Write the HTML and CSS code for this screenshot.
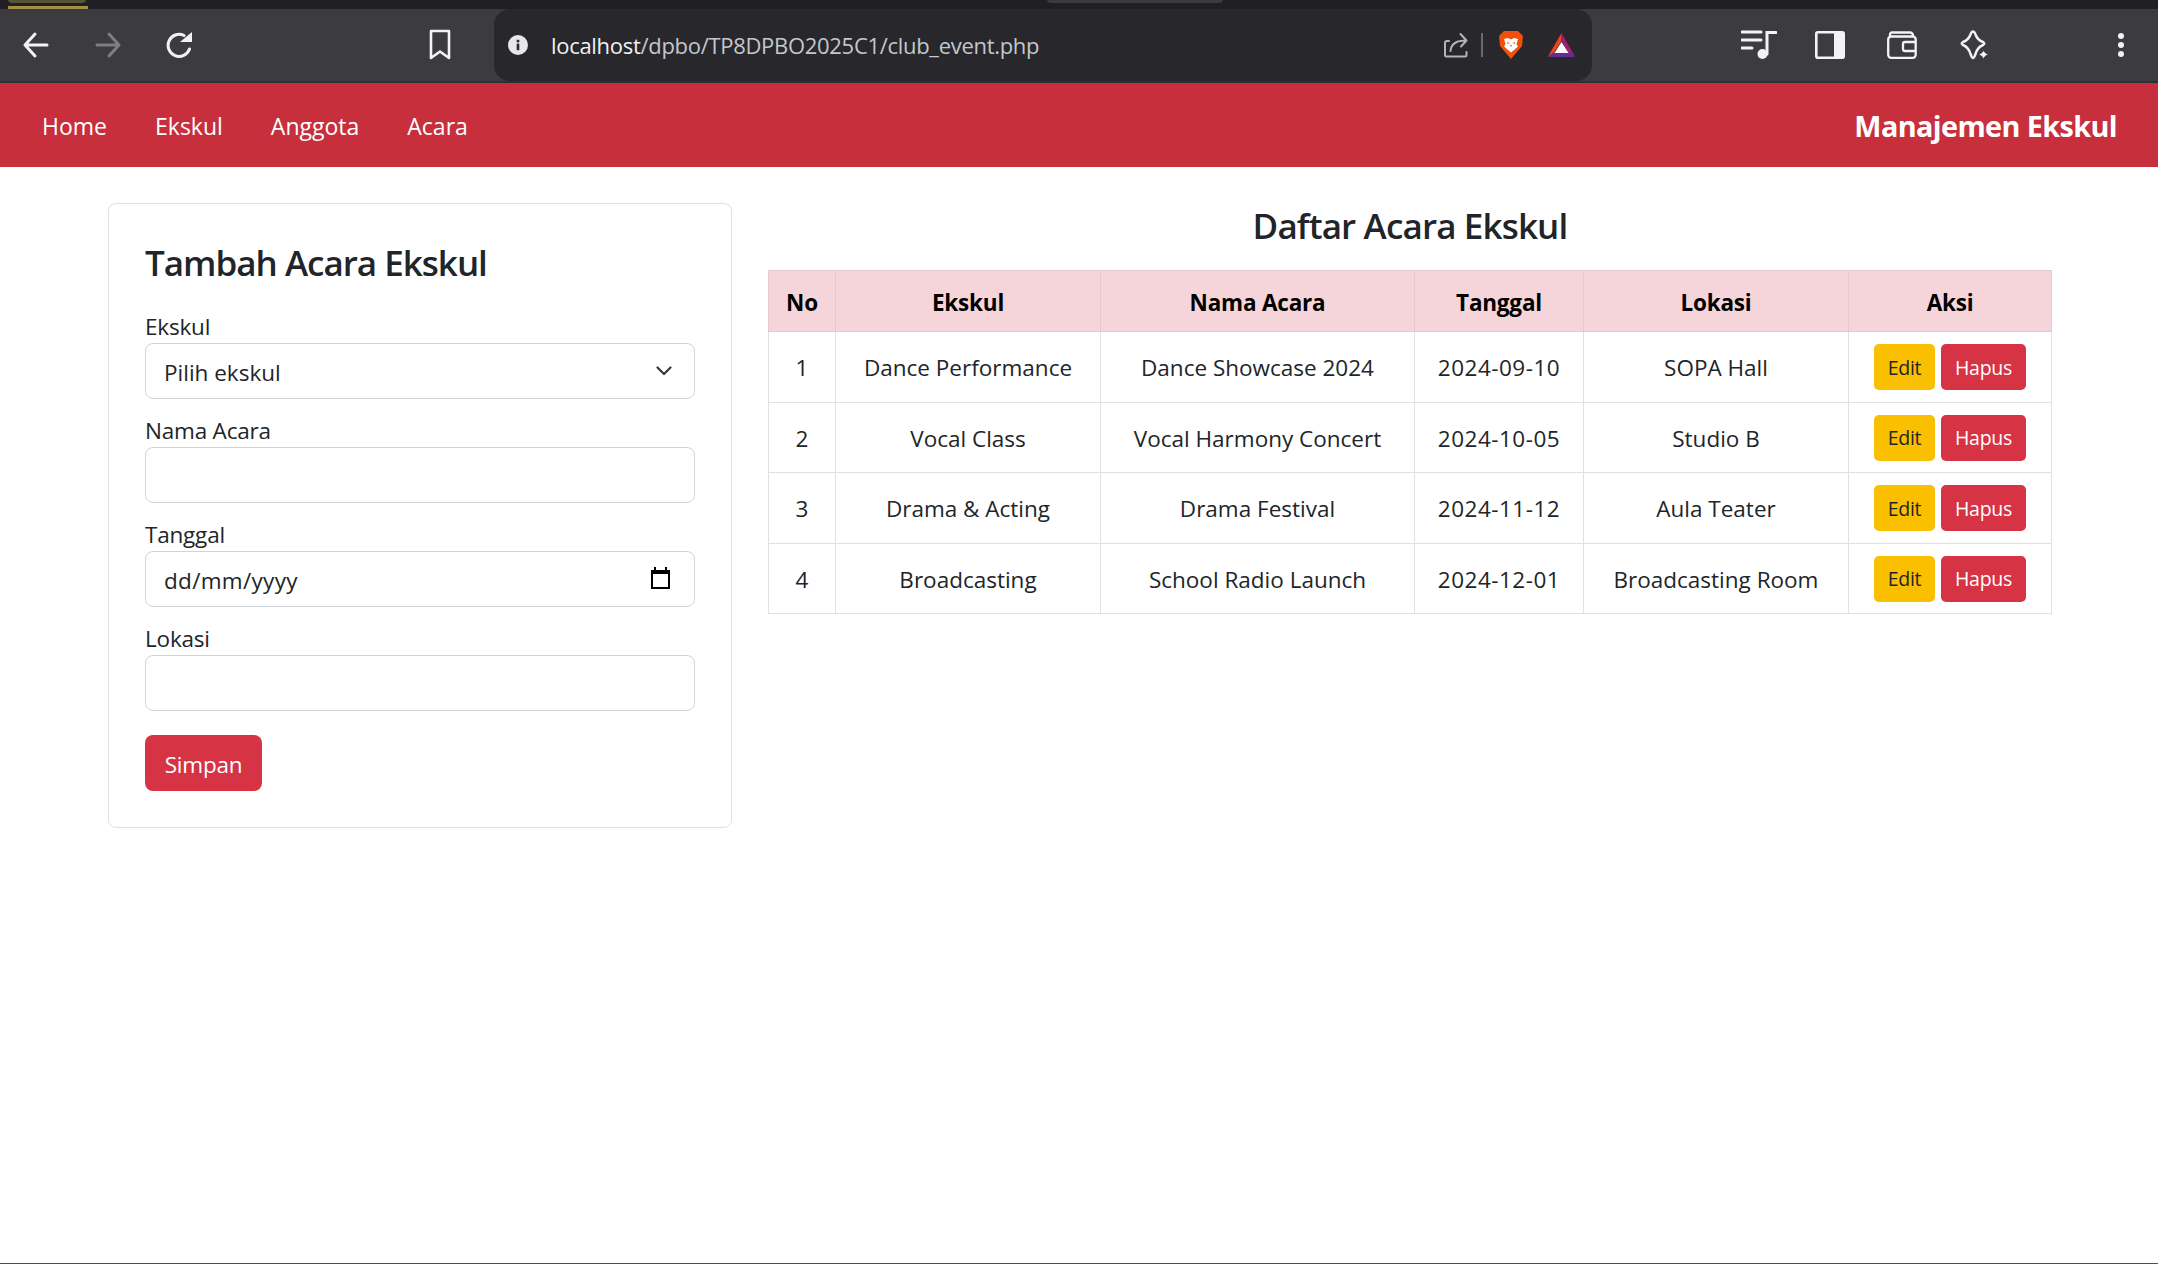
FILE: index.html
```html
<!DOCTYPE html>
<html lang="id">
<head>
<meta charset="utf-8">
<title>Manajemen Ekskul</title>
<link rel="stylesheet" href="styles.css">
</head>
<body>
<div class="strip"><span class="tab-thumb"></span><span class="tab-line"></span><span class="tab-center"></span></div>
<header class="toolbar">
  <div class="nav-icons">
    <svg class="ic" width="28" height="28" viewBox="0 0 28 28" fill="none" stroke="#f3f3f5" stroke-width="3" stroke-linecap="round" stroke-linejoin="round"><path d="M3 14H25M13 3L3 14L13 25"/></svg>
    <svg class="ic" width="28" height="28" viewBox="0 0 28 28" fill="none" stroke="#7e7e81" stroke-width="3" stroke-linecap="round" stroke-linejoin="round"><path d="M3 14H25M15 3L25 14L15 25"/></svg>
    <svg class="ic" width="28" height="28" viewBox="0 0 28 28" fill="none"><path d="M23.5 18A11 11 0 1 1 18 4.5" stroke="#f3f3f5" stroke-width="3" stroke-linecap="round"/><path d="M14 11H26V1Z" fill="#f3f3f5"/></svg>
  </div>
  <svg class="bookmark" width="26" height="32" viewBox="0 0 26 32" fill="none" stroke="#f3f3f5" stroke-width="2.6" stroke-linejoin="round"><path d="M4 2H22V29L13 22.5L4 29Z"/></svg>
  <div class="omnibox">
    <svg class="info" width="20" height="20" viewBox="0 0 20 20"><circle cx="10" cy="10" r="10" fill="#e8e8ea"/><rect x="8.7" y="8.6" width="2.6" height="6.6" fill="#28282d"/><rect x="8.7" y="4.8" width="2.6" height="2.5" fill="#28282d"/></svg>
    <span class="url"><span class="host">localhost</span>/dpbo/TP8DPBO2025C1/club_event.php</span>
    <svg class="share" width="24" height="26" viewBox="0 0 24 26" fill="none" stroke="#b4b4b7" stroke-width="2" stroke-linecap="round" stroke-linejoin="round"><path d="M5 9H3A2 2 0 0 0 1 11V23A1.5 1.5 0 0 0 2.5 24.500H21A1.500 1.500 0 0 0 22.500 23V20"/><path d="M6.500 19C7 12 12 8.500 22 8.500M16.500 2L22.500 8.500L17 14.500"/></svg>
    <span class="divider"></span>
    <svg class="brave" width="24" height="28" viewBox="0 0 24 28"><path d="M5 0H19L24 5L23 15L12 28L1 15L0 5Z" fill="#f1500c"/><path d="M5 8L9 7L12 8.500L15 7L19 8L17.500 13L19 15.500L15 19L12 21.500L9 19L5 15.500L6.500 13Z" fill="#fff"/><path d="M11 14H13L12 16Z" fill="#f1500c"/><path d="M8 11L10.500 12L8.500 13ZM16 11L13.500 12L15.500 13Z" fill="#f1500c"/></svg>
    <svg class="bat" width="27" height="24" viewBox="0 0 27 24"><path d="M13.500 0L0 23.500L6 19.500L13.500 8Z" fill="#f0441d"/><path d="M13.500 0L27 23.500L20 19.500L13.500 8Z" fill="#9c1f78"/><path d="M0 24H27L21 19H6Z" fill="#652d91"/><path d="M13.500 9L6.500 20H20.500Z" fill="#fff"/></svg>
  </div>
  <div class="ext-icons">
    <svg width="36" height="30" viewBox="0 0 36 30" fill="none" stroke="#f3f3f5" stroke-width="3" stroke-linecap="round"><path d="M1 2H20M1 10H20M1 18H11M26 24V2.500H35"/><circle cx="21.500" cy="24" r="5" fill="#f3f3f5" stroke="none"/></svg>
    <svg width="30" height="28" viewBox="0 0 30 28"><rect x="1.300" y="1.300" width="27.400" height="25.400" rx="1.500" fill="none" stroke="#f3f3f5" stroke-width="2.600"/><rect x="19" y="1" width="10" height="26" fill="#f3f3f5"/></svg>
    <svg class="ext-wide" width="30" height="28" viewBox="0 0 30 28" fill="none" stroke="#f3f3f5" stroke-width="2.300" stroke-linejoin="round"><path d="M3 6V3.500A2 2 0 0 1 5 1.500H23A3 3 0 0 1 26 4.500V6"/><rect x="1.200" y="5.500" width="27.500" height="21.300" rx="3"/><path d="M28.500 11H18A2 2 0 0 0 16 13V18A2 2 0 0 0 18 20H28.500"/></svg>
    <svg class="ext-wide" width="32" height="30" viewBox="0 0 32 30" fill="none"><path d="M14 1.500Q15.500 1.500 16.500 4.500Q18.500 10 24 12Q26.500 13.500 24 15Q18.500 17 16.500 24Q15 28 14 28Q13 28 11.500 24Q9.500 17 4 15Q1.500 13.500 4 12Q9.500 10 11.500 4.500Q12.500 1.500 14 1.500Z" stroke="#f3f3f5" stroke-width="2.500" stroke-linejoin="round"/><path d="M24.500 19.500C25 22 26.500 23.500 30 24.500C26.500 25.500 25 27 24.500 30C24 27 22.500 25.500 19 24.500C22.500 23.500 24 22 24.500 19.500Z" fill="#f3f3f5" stroke="#3c3b40" stroke-width="1"/></svg>
  </div>
  <svg class="menu" width="10" height="26" viewBox="0 0 10 26" fill="#f3f3f5"><circle cx="5" cy="4" r="3"/><circle cx="5" cy="13" r="3"/><circle cx="5" cy="22" r="3"/></svg>
</header>

<nav class="navbar">
  <ul class="nav-links">
    <li><a href="#">Home</a></li>
    <li><a href="#">Ekskul</a></li>
    <li><a href="#">Anggota</a></li>
    <li><a href="#">Acara</a></li>
  </ul>
  <a class="brand" href="#">Manajemen Ekskul</a>
</nav>

<main class="content">
  <section class="card">
    <h2 class="card-title">Tambah Acara Ekskul</h2>
    <form class="form">
      <div class="field">
        <label>Ekskul</label>
        <div class="control-wrap">
          <select class="control select"><option>Pilih ekskul</option></select>
          <svg class="chevron" width="16" height="10" viewBox="0 0 16 10" fill="none" stroke="#343a40" stroke-width="2.200" stroke-linecap="round" stroke-linejoin="round"><path d="M1.500 1.500L8 8L14.500 1.500"/></svg>
        </div>
      </div>
      <div class="field">
        <label>Nama Acara</label>
        <input class="control" type="text">
      </div>
      <div class="field">
        <label>Tanggal</label>
        <div class="control-wrap">
          <input class="control date-input" type="text" value="dd/mm/yyyy">
          <svg class="calendar" width="21" height="22" viewBox="0 0 21 22"><path d="M1 3H4V0H6V3H15V0H17V3H20V22H1Z" fill="#000"/><rect x="3" y="7" width="15" height="13" fill="#fff"/></svg>
        </div>
      </div>
      <div class="field">
        <label>Lokasi</label>
        <input class="control" type="text">
      </div>
      <button class="btn btn-red btn-save" type="button">Simpan</button>
    </form>
  </section>

  <section class="list">
    <h2 class="list-title">Daftar Acara Ekskul</h2>
    <table class="table">
      <colgroup><col class="c1"><col class="c2"><col class="c3"><col class="c4"><col class="c5"><col class="c6"></colgroup>
      <thead>
        <tr><th>No</th><th>Ekskul</th><th>Nama Acara</th><th>Tanggal</th><th>Lokasi</th><th>Aksi</th></tr>
      </thead>
      <tbody>
        <tr><td>1</td><td>Dance Performance</td><td>Dance Showcase 2024</td><td class="date">2024-09-10</td><td>SOPA Hall</td><td><div class="actions"><a class="btn btn-sm btn-yellow">Edit</a><a class="btn btn-sm btn-red">Hapus</a></div></td></tr>
        <tr><td>2</td><td>Vocal Class</td><td>Vocal Harmony Concert</td><td class="date">2024-10-05</td><td>Studio B</td><td><div class="actions"><a class="btn btn-sm btn-yellow">Edit</a><a class="btn btn-sm btn-red">Hapus</a></div></td></tr>
        <tr><td>3</td><td>Drama &amp; Acting</td><td>Drama Festival</td><td class="date">2024-11-12</td><td>Aula Teater</td><td><div class="actions"><a class="btn btn-sm btn-yellow">Edit</a><a class="btn btn-sm btn-red">Hapus</a></div></td></tr>
        <tr><td>4</td><td>Broadcasting</td><td>School Radio Launch</td><td class="date">2024-12-01</td><td>Broadcasting Room</td><td><div class="actions"><a class="btn btn-sm btn-yellow">Edit</a><a class="btn btn-sm btn-red">Hapus</a></div></td></tr>
      </tbody>
    </table>
  </section>
</main>
<div class="bottom-line"></div>
</body>
</html>
```
FILE: styles.css
```css
* { box-sizing: border-box; }
html, body { margin: 0; height: 100%; }
body {
  background: #fff;
  color: #212529;
  font-family: "Open Sans", "Noto Sans", sans-serif;
  font-size: 22.5px;
  letter-spacing: -0.2px;
  overflow: hidden;
  display: flex;
  flex-direction: column;
}

.strip { flex: none; height: 9px; background: #1f1f24; position: relative; }
.tab-thumb { position: absolute; left: 8px; top: -5px; width: 78px; height: 8px; background: #5a5236; border-radius: 4px; }
.tab-line { position: absolute; left: 8px; top: 6px; width: 80px; height: 3px; background: #a08f45; }
.tab-center { position: absolute; left: 1047px; top: -6px; width: 176px; height: 9px; background: #3a3a40; border-radius: 4px; }

.toolbar {
  flex: none;
  height: 74px;
  background: #3c3b40;
  border-bottom: 2px solid #2f2e33;
  display: flex;
  align-items: center;
  padding-left: 22px;
}
.nav-icons { display: flex; gap: 44px; align-items: center; }
.bookmark { margin-left: 233px; }
.omnibox {
  margin-left: 41px;
  width: 1098px;
  height: 72px;
  align-self: flex-start;
  background: #27272c;
  border-radius: 16px;
  display: flex;
  align-items: center;
  padding-left: 14px;
}
.info { flex: none; }
.url { margin-left: 23px; font-size: 22px; letter-spacing: -0.3px; color: #c4c7cb; flex: 1; white-space: nowrap; }
.host { color: #f1f1f3; }
.share { flex: none; }
.divider { width: 2px; height: 24px; background: #6b6b6f; margin: 0 16px 0 13px; flex: none; }
.brave { flex: none; }
.bat { flex: none; margin-left: 25px; margin-right: 17px; }
.ext-icons { display: flex; align-items: center; gap: 38px; margin-left: 149px; }
.ext-wide { margin-left: 4px; }
.menu { margin-left: 125px; }

.navbar {
  flex: none;
  height: 84px;
  background: #c82f3d;
  display: flex;
  align-items: center;
  justify-content: space-between;
  padding: 1px 41px 0 42px;
  color: #fff;
}
.nav-links { display: flex; gap: 48px; list-style: none; margin: 0; padding: 0; font-size: 23px; letter-spacing: 0; }
.nav-links a { color: #fff; text-decoration: none; }
.brand { color: #fff; font-size: 28.800px; font-weight: 700; text-decoration: none; letter-spacing: -0.6px; }

.content {
  flex: 1;
  display: flex;
  align-items: flex-start;
  gap: 36px;
  padding: 36px 106px 0 108px;
}
.card {
  flex: none;
  width: 624px;
  height: 625px;
  border: 1px solid #dfe1e4;
  border-radius: 8px;
  padding: 36px;
}
.card-title { margin: 0 0 25px; font-size: 35px; font-weight: 600; line-height: 46px; letter-spacing: -1px; }
.form { display: flex; flex-direction: column; gap: 16px; }
.field { display: flex; flex-direction: column; gap: 1px; }
.field label { line-height: 31px; height: 31px; }
.control-wrap { position: relative; }
.control {
  display: block;
  width: 100%;
  height: 56px;
  border: 1px solid #ced4da;
  border-radius: 8px;
  background: #fff;
  padding: 2px 18px 0;
  font: inherit;
  letter-spacing: inherit;
  color: #212529;
}
.date-input { letter-spacing: 0.3px; }
.select { appearance: none; -webkit-appearance: none; letter-spacing: 0; }
.chevron { position: absolute; right: 23px; top: 23px; pointer-events: none; }
.calendar { position: absolute; right: 24px; top: 16px; pointer-events: none; }

.btn { display: inline-flex; align-items: center; justify-content: center; border: 0; font: inherit; letter-spacing: inherit; text-decoration: none; }
.btn-red { background: #d63344; color: #fff; }
.btn-yellow { background: #fac000; color: #212529; }
.btn-save { width: 117px; height: 56px; border-radius: 8px; margin-top: 8px; padding: 2px 0 0; }
.btn-sm { height: 46px; border-radius: 5px; font-size: 19.500px; letter-spacing: -0.3px; }
.btn-sm.btn-yellow { width: 61px; }
.btn-sm.btn-red { width: 85px; }

.list { flex: 1; min-width: 0; }
.list-title { margin: 0; height: 67px; line-height: 46px; font-size: 35px; font-weight: 600; text-align: center; letter-spacing: -0.85px; }
.table { width: 1283px; table-layout: fixed; border-collapse: collapse; text-align: center; }
.c1 { width: 67px; } .c2 { width: 265px; } .c3 { width: 314px; } .c4 { width: 169px; } .c5 { width: 265px; } .c6 { width: 203px; }
.table th, .table td { border: 1px solid #dee2e6; padding: 2px 0 0; vertical-align: middle; letter-spacing: 0; }
.table td.date { letter-spacing: 0.5px; }
.table th { height: 61px; background: #f5d5d9; border-color: #e3c9ce; color: #000; font-weight: 700; letter-spacing: -0.2px; }
.table td { height: 70.500px; }
.actions { display: flex; justify-content: center; gap: 6px; margin-top: -1px; }

.bottom-line { flex: none; height: 1px; background: #4f4f4f; }
```
